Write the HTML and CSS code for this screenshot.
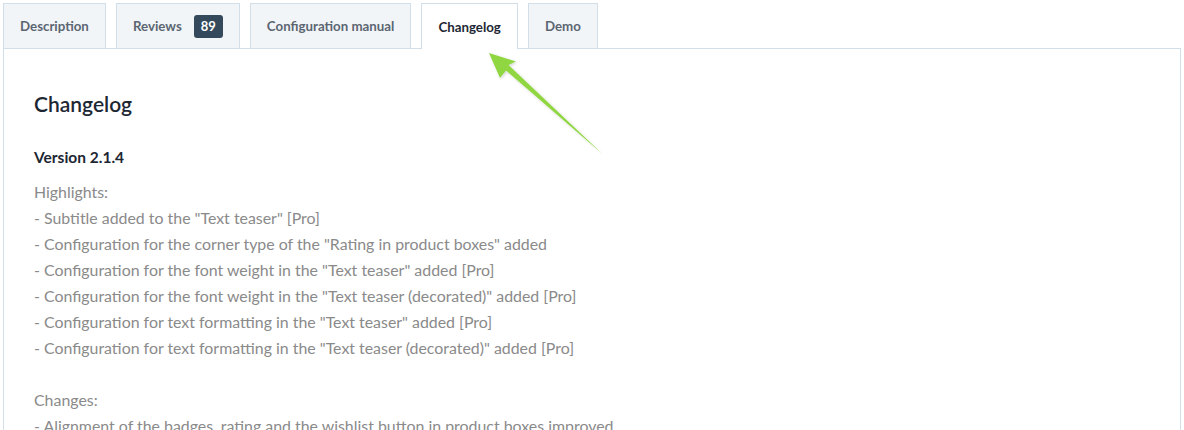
FILE: index.html
```html
<!DOCTYPE html>
<html lang="en">
<head>
    <meta charset="UTF-8">
    <meta name="viewport" content="width=device-width, initial-scale=1.0">
    <title>Changelog</title>
    <link rel="stylesheet" href="styles.css">
</head>
<body>
    <div class="page">
        <ul class="tabs">
            <li class="tab">Description</li>
            <li class="tab">Reviews <span class="badge">89</span></li>
            <li class="tab">Configuration manual</li>
            <li class="tab active">Changelog</li>
            <li class="tab">Demo</li>
        </ul>

        <div class="panel">
            <h2>Changelog</h2>
            <h4>Version 2.1.4</h4>
            <p class="log">
                Highlights:<br>
                - Subtitle added to the "Text teaser" [Pro]<br>
                - Configuration for the corner type of the "Rating in product boxes" added<br>
                - Configuration for the font weight in the "Text teaser" added [Pro]<br>
                - Configuration for the font weight in the "Text teaser (decorated)" added [Pro]<br>
                - Configuration for text formatting in the "Text teaser" added [Pro]<br>
                - Configuration for text formatting in the "Text teaser (decorated)" added [Pro]<br>
                <br>
                Changes:<br>
                - Alignment of the badges, rating and the wishlist button in product boxes improved
            </p>
        </div>

        <!-- annotation arrow pointing at the active tab -->
        <svg class="arrow" width="140" height="120" viewBox="0 0 140 120">
            <defs>
                <filter id="shadow" x="-20%" y="-20%" width="140%" height="140%">
                    <feDropShadow dx="1" dy="1" stdDeviation="1.5" flood-color="#000" flood-opacity="0.18"/>
                </filter>
            </defs>
            <polygon filter="url(#shadow)" fill="#8fd641"
                     points="9,3 36,11.5 28.5,15 122.5,104 26,20.5 20,28"/>
        </svg>
    </div>
</body>
</html>
```

FILE: styles.css
```css
body {
    margin: 0;
    font-family: Lato, 'Open Sans', sans-serif;
    background: white;
}

.page {
    position: relative;
    padding: 3px 3px 0 3px;
}

.tabs {
    list-style: none;
    margin: 0;
    padding: 0;
    display: flex;
    gap: 10px;
}

.tab {
    display: flex;
    align-items: center;
    gap: 12px;
    height: 44px;
    padding: 0 16px;
    background: #f2f5f8;
    border: 1px solid #d3dfe8;
    border-bottom: none;
    color: #5b6672;
    font-size: 13.3px;
    font-weight: 700;
}

.tab.active {
    background: white;
    color: #1d2733;
    height: 45px;
    margin-bottom: -1px;
    position: relative;
}

.badge {
    background: #35495d;
    color: white;
    border-radius: 3px;
    padding: 4px 7px;
    font-size: 13px;
    line-height: 15px;
}

.panel {
    border: 1px solid #d3dfe8;
    border-bottom: none;
    padding: 30px 31px 0 30px;
    min-height: 400px;
}

h2 {
    margin: 12px 0 0 0;
    font-size: 21px;
    font-weight: 600;
    color: #1d2733;
}

h4 {
    margin: 32px 0 0 0;
    font-size: 15.5px;
    font-weight: 700;
    color: #1d2733;
}

.log {
    margin: 13px 0 0 0;
    font-size: 15.9px;
    line-height: 26px;
    color: #8a8a8a;
}

.arrow {
    position: absolute;
    left: 480px;
    top: 50px;
}
```
